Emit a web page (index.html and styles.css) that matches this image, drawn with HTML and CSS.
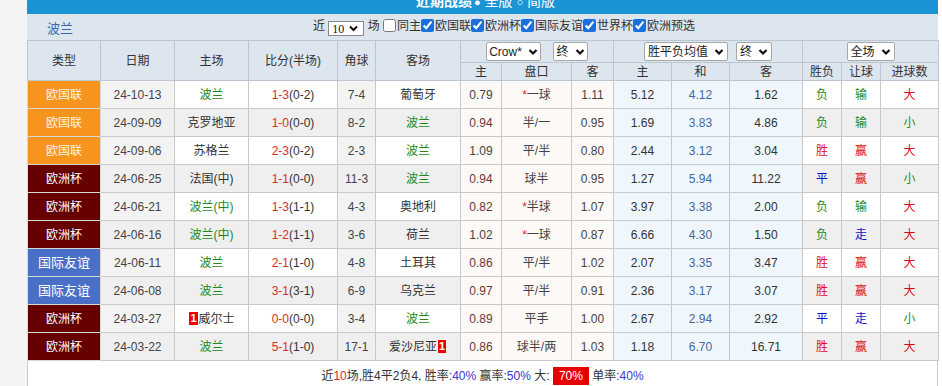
FILE: index.html
```html
<!DOCTYPE html>
<html lang="zh-CN">
<head>
    <meta charset="UTF-8">
    <title>近期战绩</title>
    <link rel="stylesheet" href="styles.css">
</head>
<body>
<div class="page">
    <div class="gutter"></div>
    <div class="panel">
        <div class="panel-title">
            <div class="title-line"><b>近期战绩</b><span class="radio">●</span> 全版 <span class="radio">○</span> 简版</div>
        </div>

        <div class="filter-bar">
            <span class="team">波兰</span>
            <div class="filters">近 <span class="num-pick">10 <svg width="9" height="7" viewBox="0 0 9 7"><path d="M1 1.5l3.5 3.5 3.5-3.5" fill="none" stroke="#111" stroke-width="2"/></svg></span> 场 <input type="checkbox" class="cb">同主<input type="checkbox" class="cb" checked>欧国联<input type="checkbox" class="cb" checked>欧洲杯<input type="checkbox" class="cb" checked>国际友谊<input type="checkbox" class="cb" checked>世界杯<input type="checkbox" class="cb" checked>欧洲预选</div>
        </div>

        <table class="record">
            <colgroup>
                <col style="width:73px"><col style="width:74px"><col style="width:74px"><col style="width:89px"><col style="width:38px"><col style="width:85px">
                <col style="width:41px"><col style="width:70px"><col style="width:42px">
                <col style="width:58px"><col style="width:58px"><col style="width:73px">
                <col style="width:39px"><col style="width:39px"><col style="width:58px">
            </colgroup>
            <thead>
                <tr class="head-top">
                    <th rowspan="2">类型</th>
                    <th rowspan="2">日期</th>
                    <th rowspan="2">主场</th>
                    <th rowspan="2">比分(半场)</th>
                    <th rowspan="2">角球</th>
                    <th rowspan="2">客场</th>
                    <th colspan="3">
                        <div class="picks gap-12">
                            <span class="pick w55">Crow* <svg width="10" height="8" viewBox="0 0 10 8"><path d="M1.5 2l3.5 3.5 3.5-3.5" fill="none" stroke="#111" stroke-width="2.2"/></svg></span>
                            <span class="pick w35">终 <svg width="10" height="8" viewBox="0 0 10 8"><path d="M1.5 2l3.5 3.5 3.5-3.5" fill="none" stroke="#111" stroke-width="2.2"/></svg></span>
                        </div>
                    </th>
                    <th colspan="3">
                        <div class="picks gap-8">
                            <span class="pick w84">胜平负均值 <svg width="10" height="8" viewBox="0 0 10 8"><path d="M1.5 2l3.5 3.5 3.5-3.5" fill="none" stroke="#111" stroke-width="2.2"/></svg></span>
                            <span class="pick w36">终 <svg width="10" height="8" viewBox="0 0 10 8"><path d="M1.5 2l3.5 3.5 3.5-3.5" fill="none" stroke="#111" stroke-width="2.2"/></svg></span>
                        </div>
                    </th>
                    <th colspan="3">
                        <div class="picks">
                            <span class="pick w48">全场 <svg width="10" height="8" viewBox="0 0 10 8"><path d="M1.5 2l3.5 3.5 3.5-3.5" fill="none" stroke="#111" stroke-width="2.2"/></svg></span>
                        </div>
                    </th>
                </tr>
                <tr class="head-sub">
                    <th>主</th><th>盘口</th><th>客</th>
                    <th>主</th><th>和</th><th>客</th>
                    <th>胜负</th><th>让球</th><th>进球数</th>
                </tr>
            </thead>
            <tbody>
                <tr>
                    <td class="type nations">欧国联</td><td class="date">24-10-13</td><td class="us">波兰</td>
                    <td><span class="score">1-3</span>(0-2)</td><td class="corner">7-4</td><td>葡萄牙</td>
                    <td class="crow">0.79</td><td class="crow line"><i>*</i>一球</td><td class="crow">1.11</td>
                    <td class="avg">5.12</td><td class="avg draw">4.12</td><td class="avg">1.62</td>
                    <td class="lose">负</td><td class="lose">输</td><td class="big">大</td>
                </tr>
                <tr class="alt">
                    <td class="type nations">欧国联</td><td class="date">24-09-09</td><td>克罗地亚</td>
                    <td><span class="score">1-0</span>(0-0)</td><td class="corner">8-2</td><td class="us">波兰</td>
                    <td class="crow low">0.94</td><td class="crow line">半/一</td><td class="crow">0.95</td>
                    <td class="avg">1.69</td><td class="avg draw">3.83</td><td class="avg">4.86</td>
                    <td class="lose">负</td><td class="lose">输</td><td class="small">小</td>
                </tr>
                <tr>
                    <td class="type nations">欧国联</td><td class="date">24-09-06</td><td>苏格兰</td>
                    <td><span class="score">2-3</span>(0-2)</td><td class="corner">2-3</td><td class="us">波兰</td>
                    <td class="crow">1.09</td><td class="crow line">平/半</td><td class="crow">0.80</td>
                    <td class="avg">2.44</td><td class="avg draw">3.12</td><td class="avg">3.04</td>
                    <td class="win">胜</td><td class="win">赢</td><td class="big">大</td>
                </tr>
                <tr class="alt">
                    <td class="type euro">欧洲杯</td><td class="date">24-06-25</td><td>法国(中)</td>
                    <td><span class="score">1-1</span>(0-0)</td><td class="corner">11-3</td><td class="us">波兰</td>
                    <td class="crow low">0.94</td><td class="crow line">球半</td><td class="crow">0.95</td>
                    <td class="avg">1.27</td><td class="avg draw">5.94</td><td class="avg">11.22</td>
                    <td class="draw-res">平</td><td class="win">赢</td><td class="small">小</td>
                </tr>
                <tr>
                    <td class="type euro">欧洲杯</td><td class="date">24-06-21</td><td class="us">波兰(中)</td>
                    <td><span class="score">1-3</span>(1-1)</td><td class="corner">4-3</td><td>奥地利</td>
                    <td class="crow low">0.82</td><td class="crow line"><i>*</i>半球</td><td class="crow">1.07</td>
                    <td class="avg">3.97</td><td class="avg draw">3.38</td><td class="avg">2.00</td>
                    <td class="lose">负</td><td class="lose">输</td><td class="big">大</td>
                </tr>
                <tr class="alt">
                    <td class="type euro">欧洲杯</td><td class="date">24-06-16</td><td class="us">波兰(中)</td>
                    <td><span class="score">1-2</span>(1-1)</td><td class="corner">3-6</td><td>荷兰</td>
                    <td class="crow">1.02</td><td class="crow line"><i>*</i>一球</td><td class="crow">0.87</td>
                    <td class="avg">6.66</td><td class="avg draw">4.30</td><td class="avg">1.50</td>
                    <td class="lose">负</td><td class="draw-res">走</td><td class="big">大</td>
                </tr>
                <tr>
                    <td class="type friendly">国际友谊</td><td class="date">24-06-11</td><td class="us">波兰</td>
                    <td><span class="score">2-1</span>(1-0)</td><td class="corner">4-8</td><td>土耳其</td>
                    <td class="crow low">0.86</td><td class="crow line">平/半</td><td class="crow">1.02</td>
                    <td class="avg">2.07</td><td class="avg draw">3.35</td><td class="avg">3.47</td>
                    <td class="win">胜</td><td class="win">赢</td><td class="big">大</td>
                </tr>
                <tr class="alt">
                    <td class="type friendly">国际友谊</td><td class="date">24-06-08</td><td class="us">波兰</td>
                    <td><span class="score">3-1</span>(3-1)</td><td class="corner">6-9</td><td>乌克兰</td>
                    <td class="crow low">0.97</td><td class="crow line">平/半</td><td class="crow">0.91</td>
                    <td class="avg">2.36</td><td class="avg draw">3.17</td><td class="avg">3.07</td>
                    <td class="win">胜</td><td class="win">赢</td><td class="big">大</td>
                </tr>
                <tr>
                    <td class="type euro">欧洲杯</td><td class="date">24-03-27</td><td><span class="red-card">1</span>威尔士</td>
                    <td><span class="score">0-0</span>(0-0)</td><td class="corner">3-4</td><td class="us">波兰</td>
                    <td class="crow low">0.89</td><td class="crow line">平手</td><td class="crow">1.00</td>
                    <td class="avg">2.67</td><td class="avg draw">2.94</td><td class="avg">2.92</td>
                    <td class="draw-res">平</td><td class="draw-res">走</td><td class="small">小</td>
                </tr>
                <tr class="alt">
                    <td class="type euro">欧洲杯</td><td class="date">24-03-22</td><td class="us">波兰</td>
                    <td><span class="score">5-1</span>(1-0)</td><td class="corner">17-1</td><td>爱沙尼亚<span class="red-card">1</span></td>
                    <td class="crow low">0.86</td><td class="crow line">球半/两</td><td class="crow">1.03</td>
                    <td class="avg">1.18</td><td class="avg draw">6.70</td><td class="avg">16.71</td>
                    <td class="win">胜</td><td class="win">赢</td><td class="big">大</td>
                </tr>
            </tbody>
        </table>

        <div class="summary">
            近<span class="hot">10</span>场,胜4平2负4, 胜率:<span class="rate">40%</span> 赢率:<span class="rate">50%</span> 大: <span class="flag">70%</span> 单率:<span class="rate">40%</span>
        </div>
    </div>
</div>
</body>
</html>
```

FILE: styles.css
```css
body {
    margin: 0;
    background: #fff;
    font-family: "Liberation Sans", "Noto Sans CJK SC", sans-serif;
    font-size: 12px;
    color: #333;
}
.page {
    display: flex;
    height: 386px;
    overflow: hidden;
}
.gutter {
    width: 27px;
    flex: none;
    background: #f4f4f4;
}
.panel {
    width: 911px;
    flex: none;
}
.panel-title {
    height: 14px;
    overflow: hidden;
    background: #1b94d5;
    color: #fff;
    text-align: center;
}
.title-line {
    margin-top: -7px;
    line-height: 16px;
    font-size: 14px;
    padding-left: 6px;
}
.title-line b {
    margin-right: 2px;
}
.radio {
    font-size: 11px;
}
.filter-bar {
    display: flex;
    align-items: center;
    height: 26px;
    background: #dde5ee;
    padding-left: 20px;
}
.team {
    color: #3a68ae;
    font-size: 13px;
    width: 266px;
    flex: none;
}
.filters {
    white-space: nowrap;
    line-height: 16px;
    color: #333;
}
.num-pick {
    display: inline-flex;
    align-items: center;
    gap: 5px;
    height: 15px;
    box-sizing: border-box;
    width: 36px;
    padding: 0 3px;
    border: 1px solid #8a8a8a;
    background: #fff;
    font-family: "Liberation Serif", serif;
    font-size: 12px;
    color: #111;
    vertical-align: -3px;
}
.cb {
    width: 13px;
    height: 13px;
    margin: 0 1px 0 0;
    vertical-align: -2px;
    accent-color: #1a70dc;
}
.record {
    width: 911px;
    border-collapse: collapse;
    table-layout: fixed;
    text-align: center;
}
.record th,
.record td {
    border: 1px solid #c9c9c9;
    padding: 0;
    white-space: nowrap;
    line-height: 16px;
}
.record th {
    background: #dde5ee;
    font-weight: normal;
    color: #333;
    border-color: #bcc6d1;
}
.head-top th {
    height: 21px;
}
.head-sub th {
    height: 17px;
}
.picks {
    display: flex;
    justify-content: center;
}
.gap-12 { gap: 12px; }
.gap-8 { gap: 8px; }
.pick {
    display: inline-flex;
    align-items: center;
    justify-content: center;
    gap: 6px;
    height: 19px;
    box-sizing: border-box;
    border: 1px solid #a7a7a7;
    border-radius: 2px;
    background: #fff;
    color: #222;
}
.w55 { width: 55px; }
.w35 { width: 35px; }
.w84 { width: 84px; }
.w36 { width: 36px; }
.w48 { width: 48px; }
.record td {
    height: 27px;
    background: #fff;
}
.record tr.alt td {
    background: #efefef;
}
.record td.date,
.record td.corner {
    background: #f3f3f3;
    color: #444;
}
.record tr.alt td.date,
.record tr.alt td.corner {
    background: #efefef;
}
.record tr td.type {
    color: #fff;
    border-color: #d8d8d8;
}
.record tr td.nations { background: #f7941d; color: #fff3e0; }
.record tr td.euro { background: #660000; }
.record tr td.friendly { background: #4a6fc7; font-size: 13px; }
.us { color: #1e8a1e; }
.score { color: #e02a2a; }
.record tr td.crow {
    background: #fcf9f6;
    color: #444;
}
.record td.crow.low { color: #6b3a3a; }
.record td.line { color: #2f5c9c; }
.line i {
    font-style: normal;
    color: #e02a2a;
}
.record tr td.avg {
    background: #eff6fc;
    color: #333;
}
.record td.avg.draw { color: #46679a; }
.win, .big { color: #dd1111; }
.lose, .small { color: #1e8a1e; }
.draw-res { color: #1111cc; }
.red-card {
    display: inline-block;
    background: #e00;
    color: #fff;
    font-weight: bold;
    font-size: 11px;
    line-height: 13px;
    padding: 0 1px;
    margin: 0 1px;
    vertical-align: 1px;
}
.summary {
    border-left: 1px solid #c9c9c9;
    border-right: 1px solid #c9c9c9;
    padding-top: 6px;
    height: 30px;
    text-align: center;
    color: #333;
    line-height: 18px;
}
.hot { color: #e02a2a; }
.rate { color: #3535d0; }
.flag {
    display: inline-block;
    background: #e80000;
    color: #fff;
    padding: 0 6px;
    line-height: 18px;
}
```
